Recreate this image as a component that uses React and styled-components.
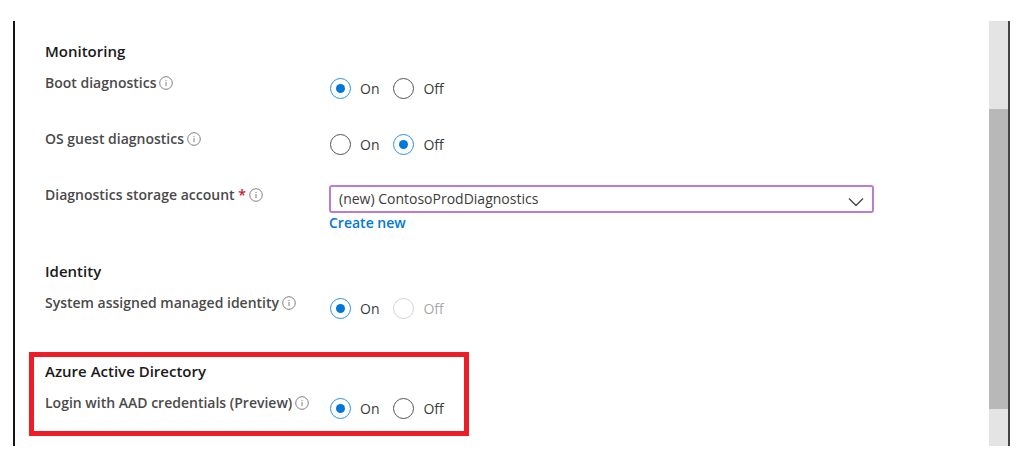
import * as React from 'react'
import styled, {createGlobalStyle} from 'styled-components'

const GlobalStyle = createGlobalStyle`
  *, *::before, *::after {
    box-sizing: border-box;
  }
  body {
    margin: 0;
    background: #fff;
    color: #3b3b3b;
    font-family: 'Open Sans', 'Noto Sans', sans-serif;
    font-size: 14px;
    line-height: 20px;
  }
`

/**
 * Virtual machine management settings.
 * @return {JSX.Element}
 */
const App = () =>
  <>
    <GlobalStyle />
    <Frame>
      <Content>
        <Section $gap={4}>
          <Heading>Monitoring</Heading>
          <Rows>
            <RadioRow id='boot' label='Boot diagnostics' value='on' />
            <RadioRow id='guest' label='OS guest diagnostics' value='off' />
            <StorageRow />
          </Rows>
        </Section>
        <Section $gap={16}>
          <Heading>Identity</Heading>
          <Rows>
            <RadioRow id='identity' label='System assigned managed identity' value='on' offDisabled />
          </Rows>
        </Section>
        <Section $highlighted>
          <Heading>Azure Active Directory</Heading>
          <Rows>
            <RadioRow id='aad' label='Login with AAD credentials (Preview)' value='on' />
          </Rows>
        </Section>
      </Content>
      <Track>
        <Thumb />
      </Track>
    </Frame>
  </>

/**
 * Setting with the On and Off options.
 * @param {Object} props
 * @param {string} props.id
 * @param {string} props.label
 * @param {string} props.value
 * @param {boolean} props.offDisabled
 * @return {JSX.Element}
 */
const RadioRow = ({id, label, value, offDisabled}) => {
  const [selected, setSelected] = React.useState(value)
  return (
    <Row>
      <Caption>
        <span id={`${id}-label`}>{label}</span>
        <Info label={label} />
      </Caption>
      <RadioGroup role='radiogroup' aria-labelledby={`${id}-label`}>
        <Option>
          <Radio name={id} checked={selected === 'on'} onChange={() => setSelected('on')} />
          On
        </Option>
        <Option $disabled={offDisabled}>
          <Radio name={id} checked={selected === 'off'} disabled={offDisabled}
            onChange={() => setSelected('off')} />
          Off
        </Option>
      </RadioGroup>
    </Row>
  )
}

/**
 * Storage account drop-down.
 * @return {JSX.Element}
 */
const StorageRow = () =>
  <Row>
    <Caption>
      <label htmlFor='storage'>Diagnostics storage account <Required>*</Required></label>
      <Info label='Diagnostics storage account' />
    </Caption>
    <div>
      <SelectBox>
        <Select id='storage'>
          <option>(new) ContosoProdDiagnostics</option>
        </Select>
        <Chevron viewBox='0 0 16 10' aria-hidden='true'>
          <path d='M1 1.5 L8 8.5 L15 1.5' />
        </Chevron>
      </SelectBox>
      <CreateLink href='#'>Create new</CreateLink>
    </div>
  </Row>

/**
 * Info icon.
 * @param {Object} props
 * @param {string} props.label
 * @return {JSX.Element}
 */
const Info = ({label}) =>
  <InfoButton type='button' aria-label={`About ${label}`}>
    <svg width='14' height='14' viewBox='0 0 14 14'>
      <circle cx='7' cy='7' r='6.3' fill='none' stroke='#808080' strokeWidth='1' />
      <path d='M7 6v4.2M7 3.9v1.1' stroke='#808080' strokeWidth='1' />
    </svg>
  </InfoButton>

const Frame = styled.main`
  display: flex;
  margin: 21px 14px 13px 13px;
  border-left: 2px solid #141418;
  border-right: 2px solid #444;
`

const Content = styled.div`
  flex: 1;
  min-width: 0;
  padding: 11px 14px 10px;
`

const Track = styled.div`
  display: flex;
  flex-direction: column;
  width: 19px;
  background: #e4e4e4;

  &::before {
    content: '';
    flex: 88;
  }
  &::after {
    content: '';
    flex: 37;
  }
`

const Thumb = styled.div`
  flex: 300;
  background: #b8b8b8;
`

const Section = styled.section`
  width: fit-content;
  max-width: 100%;
  margin-bottom: ${props => props.$gap || 0}px;
  padding: 4px 20px 10px 11px;
  border: 5px solid ${props => props.$highlighted ? '#ee1c25' : 'transparent'};
`

const Heading = styled.h2`
  margin: 0 0 12px;
  color: #1a1a1a;
  font-size: 15px;
  font-weight: 600;
`

const Rows = styled.div`
  display: grid;
  gap: 28px;
`

const Row = styled.div`
  display: grid;
  grid-template-columns: 284px minmax(0, auto);
  justify-content: start;
`

const Caption = styled.div`
  display: flex;
  align-items: center;
  gap: 3px;
  height: 20px;
  color: #4a4a4a;
  font-weight: 600;
  white-space: nowrap;
`

const Required = styled.span`
  color: #c8202c;
`

const InfoButton = styled.button`
  display: flex;
  padding: 0;
  border: 0;
  background: none;
`

const RadioGroup = styled.div`
  display: flex;
  gap: 14px;
  padding: 5px 0 2px 1px;
`

const Option = styled.label`
  display: flex;
  align-items: center;
  gap: 9px;
  height: 21px;
  color: ${props => props.$disabled ? '#aaa' : '#3b3b3b'};
`

const Radio = styled.input.attrs({type: 'radio'})`
  appearance: none;
  display: grid;
  place-items: center;
  width: 21px;
  height: 21px;
  margin: 0;
  border: 1px solid #555;
  border-radius: 50%;
  background: #fff;

  &:checked {
    border-color: #2f8fe6;
  }
  &:checked::before {
    content: '';
    width: 9px;
    height: 9px;
    border-radius: 50%;
    background: #0078d7;
  }
  &:disabled {
    border-color: #d2d2d2;
  }
`

const SelectBox = styled.div`
  position: relative;
  width: 545px;
  max-width: 100%;
`

const Select = styled.select`
  appearance: none;
  display: block;
  width: 100%;
  height: 28px;
  padding: 0 32px 0 8px;
  border: 2px solid #bb7dd0;
  border-radius: 3px;
  background: #fff;
  color: #3b3b3b;
  font: inherit;
`

const Chevron = styled.svg`
  position: absolute;
  top: 12px;
  right: 10px;
  width: 16px;
  height: 10px;
  fill: none;
  stroke: #444;
  stroke-width: 1.3;
  pointer-events: none;
`

const CreateLink = styled.a`
  display: block;
  width: fit-content;
  color: #0078d7;
  font-weight: 600;
  text-decoration: none;
`

export default App
